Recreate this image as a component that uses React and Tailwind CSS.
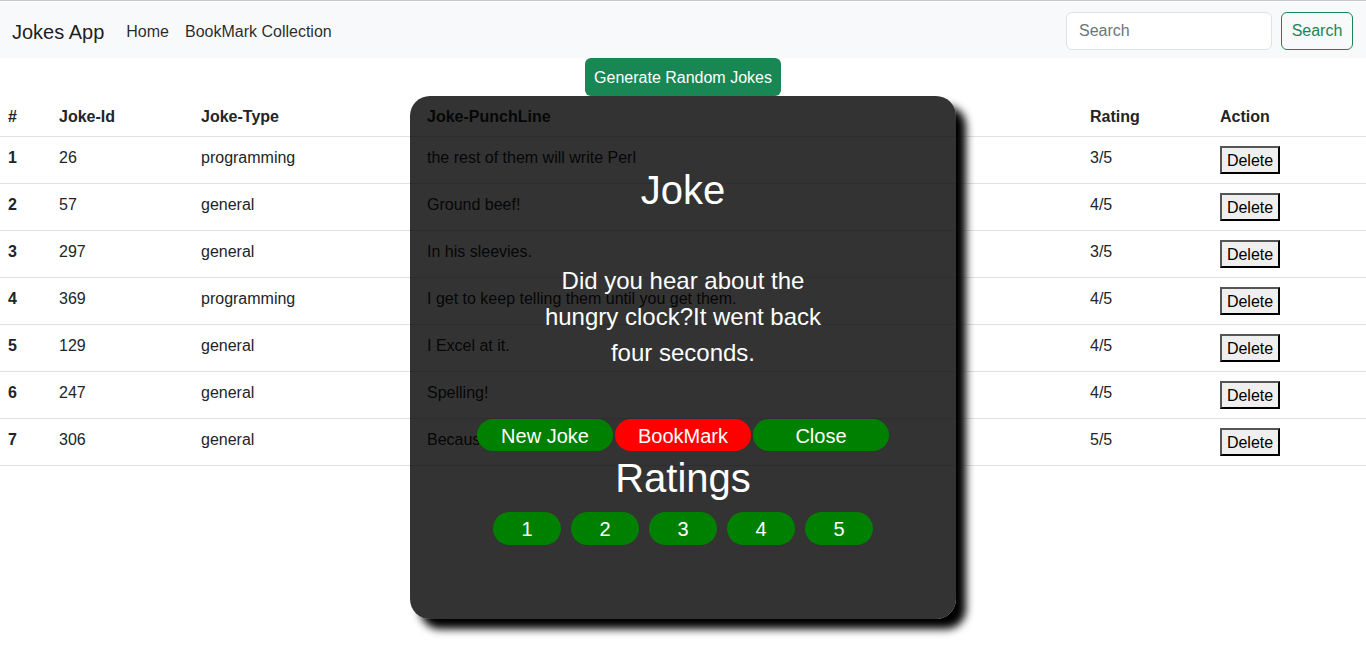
import React from 'react';

const jokes = [
  { id: 26, type: 'programming', punchline: 'the rest of them will write Perl', rating: '3/5' },
  { id: 57, type: 'general', punchline: 'Ground beef!', rating: '4/5' },
  { id: 297, type: 'general', punchline: 'In his sleevies.', rating: '3/5' },
  { id: 369, type: 'programming', punchline: 'I get to keep telling them until you get them.', rating: '4/5' },
  { id: 129, type: 'general', punchline: 'I Excel at it.', rating: '4/5' },
  { id: 247, type: 'general', punchline: 'Spelling!', rating: '4/5' },
  { id: 306, type: 'general', punchline: 'Because it was two tired.', rating: '5/5' },
];

const cols = 'grid grid-cols-[51px_142px_226px_663px_130px_1fr]';

const App = () => {
  return (
    <div className="relative min-h-screen bg-white text-[#212529] font-['Liberation_Sans',Arial,sans-serif]">
      <div className="h-px bg-[#c8c8c8]"></div>
      <div className="h-px bg-white"></div>

      {/* Navbar */}
      <nav className="flex items-center h-[56px] bg-[#f8f9fa] pl-3 pr-[13px]">
        <span className="mt-[3px] text-[20px] leading-[30px] text-black/90 mr-[14px]">Jokes App</span>
        <a className="mt-[3px] px-2 text-base text-black/85">Home</a>
        <a className="mt-[3px] px-2 text-base text-black/85">BookMark Collection</a>
        <div className="ml-auto mt-px flex items-center gap-[9px]">
          <input
            placeholder="Search"
            className="w-[206px] h-[38px] rounded-md border border-[#dee2e6] bg-white px-3 pt-px text-base placeholder:text-[#6c757d] outline-none"
          />
          <button className="w-[72px] h-[38px] pt-px rounded-md border border-[#198754] text-[#198754] text-base">
            Search
          </button>
        </div>
      </nav>

      <div className="flex justify-center">
        <button className="w-[196px] h-[38px] pt-px rounded-md bg-[#198754] text-white text-base whitespace-nowrap">
          Generate Random Jokes
        </button>
      </div>

      {/* Table */}
      <div className="text-base">
        <div className={`${cols} h-[41px] border-b border-[#dee2e6] font-bold`}>
          <div className="px-2 pt-[9px] leading-6">#</div>
          <div className="px-2 pt-[9px] leading-6">Joke-Id</div>
          <div className="px-2 pt-[9px] leading-6">Joke-Type</div>
          <div className="px-2 pt-[9px] leading-6">Joke-PunchLine</div>
          <div className="px-2 pt-[9px] leading-6">Rating</div>
          <div className="px-2 pt-[9px] leading-6">Action</div>
        </div>
        {jokes.map((joke, i) => (
          <div key={joke.id} className={`${cols} h-[47px] border-b border-[#dee2e6]`}>
            <div className="px-2 pt-[9px] leading-6 font-bold">{i + 1}</div>
            <div className="px-2 pt-[9px] leading-6">{joke.id}</div>
            <div className="px-2 pt-[9px] leading-6">{joke.type}</div>
            <div className="px-2 pt-[9px] leading-6">{joke.punchline}</div>
            <div className="px-2 pt-[9px] leading-6">{joke.rating}</div>
            <div className="px-2 pt-[9px]">
              <button className="w-[60px] h-[28px] pt-px bg-[#efefef] border-2 border-t-[#555] border-l-[#555] border-r-black border-b-black text-base leading-none text-black">
                Delete
              </button>
            </div>
          </div>
        ))}
      </div>

      {/* Joke modal */}
      <div className="absolute top-[96px] left-1/2 -translate-x-1/2 w-[546px] h-[523px] rounded-[20px] bg-black/80 shadow-[10px_10px_9px_#000] flex flex-col items-center pt-[70px] text-white">
        <h1 className="text-[40px] leading-[48px] font-medium">Joke</h1>
        <p className="mt-[49px] w-[300px] text-center text-[24px] leading-[36px]">
          Did you hear about the hungry clock?It went back four seconds.
        </p>
        <div className="mt-[48px] flex gap-0.5">
          <button className="w-[136px] h-[32px] pt-px rounded-full bg-[#008000] text-[20px] leading-none">New Joke</button>
          <button className="w-[136px] h-[32px] pt-px rounded-full bg-[#ff0000] text-[20px] leading-none">BookMark</button>
          <button className="w-[136px] h-[32px] pt-px rounded-full bg-[#008000] text-[20px] leading-none">Close</button>
        </div>
        <h1 className="mt-[3px] text-[40px] leading-[48px] font-medium">Ratings</h1>
        <div className="mt-[10px] flex gap-[10px]">
          {[1, 2, 3, 4, 5].map((n) => (
            <button key={n} className="w-[68px] h-[33px] rounded-full bg-[#008000] text-[20px] leading-none">
              {n}
            </button>
          ))}
        </div>
      </div>
    </div>
  );
};

export default App;
